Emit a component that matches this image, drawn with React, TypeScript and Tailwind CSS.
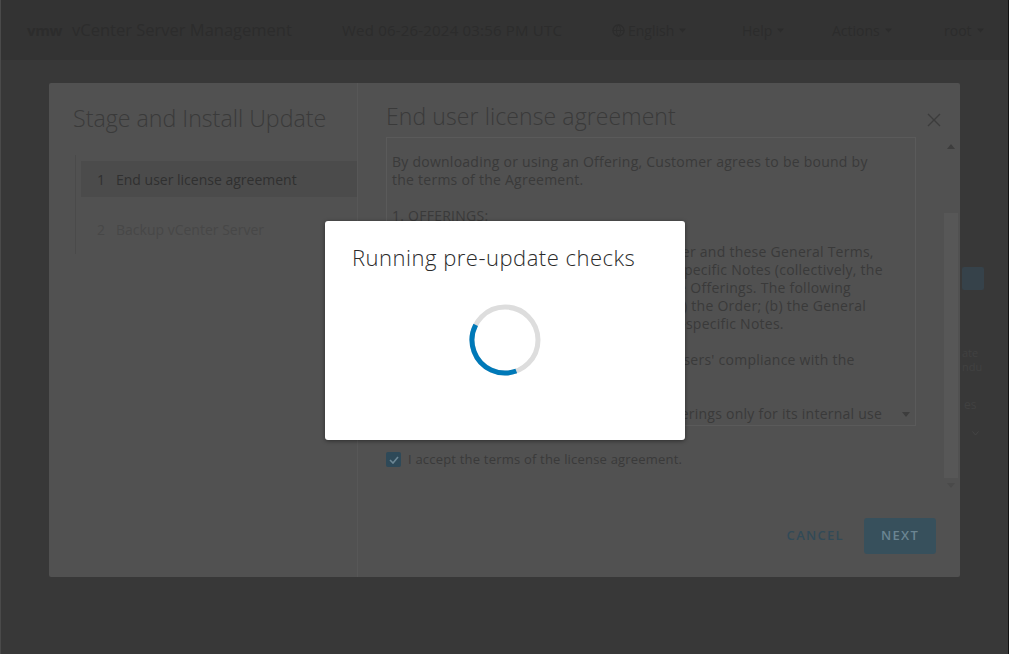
import React from "react";

const licenseLines = [
  "By downloading or using an Offering, Customer agrees to be bound by",
  "the terms of the Agreement.",
  "",
  "1. OFFERINGS:",
  "",
  "1.1 Applicable Terms. The terms of the Order and these General Terms,",
  "including applicable Exhibits and Offering-specific Notes (collectively, the",
  "\u201CAgreement\u201D), govern Customer\u2019s use of the Offerings. The following",
  "descending order of precedence applies: (a) the Order; (b) the General",
  "Terms; (c) the Exhibits; and (d) the Offering-specific Notes.",
  "",
  "1.2 Users. Customer is responsible for its Users' compliance with the",
  "Agreement.",
  "",
  "1.3 Restrictions. Customer may use the Offerings only for its internal use",
];

function Caret() {
  return (
    <svg width="7" height="5" viewBox="0 0 7 5" className="ml-[5px]">
      <path d="M0 0.5 L3.5 4.5 L7 0.5 Z" fill="#2c2c2c" />
    </svg>
  );
}

export default function App() {
  return (
    <div className="relative w-[1009px] h-[654px] overflow-hidden bg-[#383838] border-l border-l-[#4a4a4a] border-r border-r-[#111111] font-['Open_Sans',sans-serif]">
      {/* header */}
      <header className="h-[60px] bg-[#333333] flex items-center text-[#2c2c2c] text-[15px] pl-[26px]">
        <span className="font-bold tracking-tight w-[45px]">vmw</span>
        <span className="text-[16.5px] w-[270px]">vCenter Server Management</span>
        <span className="w-[270px] tracking-[0.2px]">Wed 06-26-2024 03:56 PM UTC</span>
        <span className="flex items-center w-[130px] text-[14px]">
          <svg width="13" height="13" viewBox="0 0 14 14" className="mr-[3px]">
            <circle cx="7" cy="7" r="6" fill="none" stroke="#2c2c2c" strokeWidth="1.3" />
            <path d="M1 7h12M7 1c-3 3-3 9 0 12M7 1c3 3 3 9 0 12" fill="none" stroke="#2c2c2c" strokeWidth="1" />
          </svg>
          English
          <Caret />
        </span>
        <span className="flex items-center w-[90px] text-[14px]">
          Help
          <Caret />
        </span>
        <span className="flex items-center w-[112px] text-[14px]">
          Actions
          <Caret />
        </span>
        <span className="flex items-center text-[14px]">
          root
          <Caret />
        </span>
      </header>

      {/* main */}
      <div className="flex pt-[23px]">
        <div className="w-[48px]" />
        {/* wizard modal */}
        <div className="w-[911px] h-[494px] bg-[#515151] rounded-[2px] flex">
          {/* left */}
          <div className="w-[309px] border-r border-r-[#575757] pl-[24px] pt-[20px]">
            <div className="text-[23.2px] font-light text-[#3a3a3a] leading-[30px]">
              Stage and Install Update
            </div>
            <div className="mt-[22px] ml-[2px] border-l border-l-[#4a4a4a] h-[99px] pt-[6px] pl-[5px]">
              <div className="h-[36px] bg-[#4b4b4b] flex items-center text-[14px] text-[#303030] pl-[16px]">
                <span className="w-[19px]">1</span>
                <span>End user license agreement</span>
              </div>
              <div className="h-[36px] mt-[14px] flex items-center text-[14px] text-[#474747] pl-[16px]">
                <span className="w-[19px]">2</span>
                <span>Backup vCenter Server</span>
              </div>
            </div>
          </div>
          {/* right */}
          <div className="flex-1 flex">
            <div className="flex-1 pl-[28px] flex flex-col">
              <div className="flex items-start justify-between pt-[18px]">
                <div className="text-[23px] font-light text-[#3a3a3a] leading-[30px] tracking-[0.1px]">
                  End user license agreement
                </div>
                <svg width="14" height="14" viewBox="0 0 14 14" className="mt-[12px] mr-[-6px]">
                  <path d="M1 1 L13 13 M13 1 L1 13" stroke="#3c3c3c" strokeWidth="1.4" />
                </svg>
              </div>
              <div className="mt-[6px] w-[530px] h-[289px] border border-[#5a5a5a] relative overflow-hidden">
                <div className="pl-[5px] pt-[15px] text-[14px] leading-[18px] tracking-[0.25px] text-[#3a3a3a]">
                  {licenseLines.map((l, i) => (
                    <div key={i} className="h-[18px] whitespace-nowrap">
                      {l}
                    </div>
                  ))}
                </div>
                <svg width="8" height="5" viewBox="0 0 8 5" className="absolute right-[5px] bottom-[8px]">
                  <path d="M0 0 L8 0 L4 5 Z" fill="#3d3d3d" />
                </svg>
              </div>
              <div className="mt-[24px] flex items-center">
                <div className="w-[15px] h-[15px] rounded-[2px] bg-[#2e4958] flex items-center justify-center">
                  <svg width="10" height="8" viewBox="0 0 10 8">
                    <path d="M1 4 L4 7 L9 1" fill="none" stroke="#6d8795" strokeWidth="1.6" />
                  </svg>
                </div>
                <span className="ml-[7px] text-[13px] tracking-[0.2px] text-[#3a3a3a]">
                  I accept the terms of the license agreement.
                </span>
              </div>
              <div className="mt-auto mb-[23px] flex items-center justify-end mr-[-1px]">
                <span className="text-[13px] font-semibold tracking-[1.3px] text-[#324a57] mr-[20px]">
                  CANCEL
                </span>
                <div className="w-[72px] h-[36px] rounded-[3px] bg-[#37505c] flex items-center justify-center text-[13px] font-semibold tracking-[1.3px] text-[#6b8592]">
                  NEXT
                </div>
              </div>
            </div>
            {/* outer scrollbar */}
            <div className="w-[14px] ml-[9px] mr-[2px] mt-[54px] h-[355px] flex flex-col items-center">
              <svg width="8" height="5" viewBox="0 0 8 5" className="mt-[7px]">
                <path d="M0 5 L8 5 L4 0 Z" fill="#3d3d3d" />
              </svg>
              <div className="mt-[64px] w-full h-[265px] bg-[#575757]" />
              <svg width="8" height="5" viewBox="0 0 8 5" className="mt-[5px]">
                <path d="M0 0 L8 0 L4 5 Z" fill="#4a4a4a" />
              </svg>
            </div>
          </div>
        </div>
        {/* right background peek */}
        <div className="flex-1 flex flex-col pl-[2px]">
          <div className="mt-[184px] w-[22px] h-[23px] bg-[#36424a] rounded-[2px]" />
          <div className="mt-[56px] text-[11px] leading-[14px] text-[#414141]">ate</div>
          <div className="text-[11px] leading-[14px] text-[#414141]">ndu</div>
          <div className="mt-[24px] text-[12px] leading-[13px] text-[#414141] pl-[2px]">es</div>
          <svg width="7" height="5" viewBox="0 0 7 5" className="mt-[20px] ml-[10px]">
            <path d="M0.5 0.5 L3.5 4 L6.5 0.5" fill="none" stroke="#444444" strokeWidth="1" />
          </svg>
        </div>
      </div>

      {/* pre-update checks dialog */}
      <div className="absolute left-[324px] top-[221px] w-[360px] h-[219px] bg-white rounded-[3px] shadow-[0_1px_4px_rgba(0,0,0,0.45)] flex flex-col">
        <div className="pl-[27px] pt-[21px] text-[22px] font-light text-[#2b2b2b] leading-[30px] tracking-[0.5px]">
          Running pre-update checks
        </div>
        <div className="flex justify-center mt-[32px]">
          <svg width="72" height="72" viewBox="0 0 72 72">
            <circle cx="36" cy="36" r="33" fill="none" stroke="#dddddd" strokeWidth="5" />
            <circle
              cx="36"
              cy="36"
              r="33"
              fill="none"
              stroke="#0079b8"
              strokeWidth="5"
              strokeDasharray="79 300"
              transform="rotate(70 36 36)"
            />
          </svg>
        </div>
      </div>
    </div>
  );
}
